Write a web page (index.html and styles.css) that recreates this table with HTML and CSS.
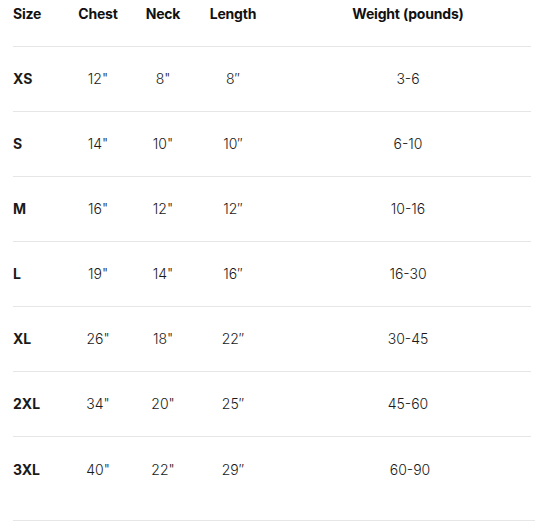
FILE: index.html
```html
<!DOCTYPE html>
<html>
<head>
<meta charset="utf-8">
<link rel="stylesheet" href="styles.css">
</head>
<body>
<div class="chart">
  <div class="row head">
    <div class="c size">Size</div><div class="c">Chest</div><div class="c">Neck</div><div class="c">Length</div><div class="c weight">Weight (pounds)</div>
  </div>
  <div class="row"><div class="c size">XS</div><div class="c">12"</div><div class="c">8"</div><div class="c">8″</div><div class="c weight">3-6</div></div>
  <div class="row"><div class="c size">S</div><div class="c">14"</div><div class="c">10"</div><div class="c">10″</div><div class="c weight">6-10</div></div>
  <div class="row"><div class="c size">M</div><div class="c">16"</div><div class="c">12"</div><div class="c">12″</div><div class="c weight">10-16</div></div>
  <div class="row"><div class="c size">L</div><div class="c">19"</div><div class="c">14"</div><div class="c">16″</div><div class="c weight">16-30</div></div>
  <div class="row"><div class="c size">XL</div><div class="c">26"</div><div class="c">18"</div><div class="c">22″</div><div class="c weight">30-45</div></div>
  <div class="row"><div class="c size">2XL</div><div class="c">34"</div><div class="c">20"</div><div class="c">25″</div><div class="c weight">45-60</div></div>
  <div class="row last"><div class="c size">3XL</div><div class="c">40"</div><div class="c">22"</div><div class="c">29″</div><div class="c weight">60-90</div></div>
</div>
</body>
</html>
```
FILE: styles.css
```css
html, body {
  margin: 0;
  padding: 0;
  background: #ffffff;
}
body {
  font-family: Inter, Roboto, "Liberation Sans", sans-serif;
  color: #1a1a1a;
  font-size: 14px;
}
.chart {
  padding-left: 13px;
  width: 518px;
}
.row {
  display: grid;
  grid-template-columns: 52px 66px 64px 76px 1fr;
  align-items: center;
  height: 64px;
  border-bottom: 1px solid #e6e6e6;
}
.row.head {
  height: 46px;
  align-items: start;
  color: #111;
}
.row.head .c {
  padding-top: 5px;
  line-height: 18px;
  letter-spacing: -0.2px;
}
.row.last {
  height: 83px;
  align-items: start;
  width: 522px;
}
.row.last .c {
  padding-top: 24px;
  line-height: 18px;
}
.c {
  text-align: center;
  font-weight: 300;
  line-height: 18px;
}
.head .c { font-weight: 700; }
.c.size {
  text-align: left;
  font-weight: 700;
}
.c.weight {
  padding-left: 14px;
}
```
